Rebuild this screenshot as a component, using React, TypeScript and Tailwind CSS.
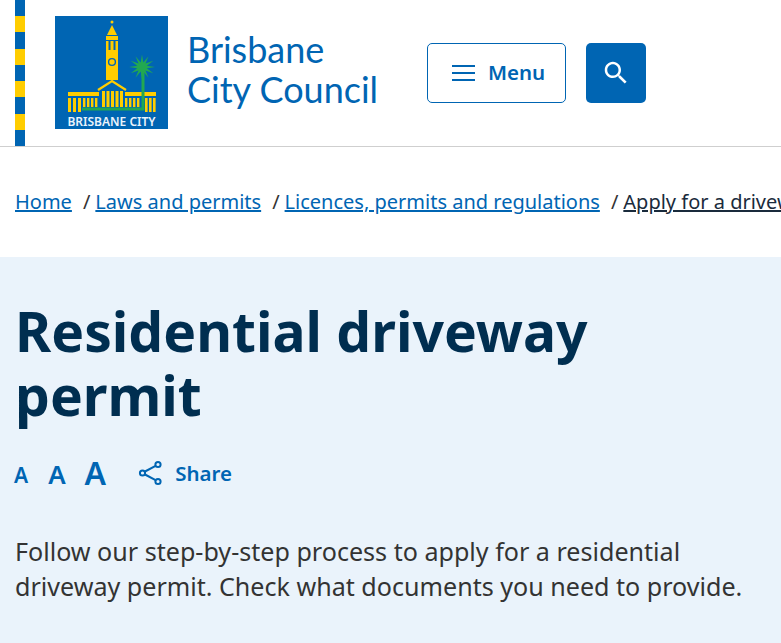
const stripes = ['bg-[#0065b3]', 'bg-[#ffcd00]', 'bg-[#0065b3]', 'bg-[#ffcd00]', 'bg-[#0065b3]', 'bg-[#ffcd00]', 'bg-[#0065b3]', 'bg-[#ffcd00]', 'bg-[#0065b3]'];

const crumbs = ['Home', 'Laws and permits', 'Licences, permits and regulations'];

// palm fronds, a 12 point star round the top of the stem
const palm = Array.from({ length: 24 }, (_, i) => {
  const r = i % 2 === 0 ? 13 : 5;
  const a = (i * Math.PI) / 12 - Math.PI / 2;
  return `${(87 + r * Math.cos(a)).toFixed(1)},${(51 + r * 0.95 * Math.sin(a)).toFixed(1)}`;
}).join(' ');

function Logo() {
  return (
    <svg width="113" height="113" viewBox="0 0 113 113" className="shrink-0">
      <rect width="113" height="113" fill="#0065b3" />
      {/* clock tower */}
      <circle cx="57" cy="6" r="1.5" fill="#ffcd00" />
      <path d="M57 9 L62 19 H52 Z" fill="#ffcd00" />
      <rect x="51" y="20" width="12" height="4" fill="#ffcd00" />
      <rect x="51" y="25" width="2.5" height="9" fill="#ffcd00" />
      <rect x="55.5" y="25" width="3" height="9" fill="#ffcd00" />
      <rect x="60.5" y="25" width="2.5" height="9" fill="#ffcd00" />
      <rect x="51" y="34" width="12" height="30" fill="#ffcd00" />
      <circle cx="57" cy="46" r="3.4" fill="none" stroke="#0065b3" strokeWidth="1.4" />
      {/* roof */}
      <path d="M43 74 L57 65 L71 74" fill="none" stroke="#ffcd00" strokeWidth="2.2" />
      <rect x="13" y="76" width="31" height="4" fill="#ffcd00" />
      <rect x="70" y="76" width="31" height="4" fill="#ffcd00" />
      {/* columns */}
      {[13, 18, 23].map((x) => <rect key={x} x={x} y="82" width="3" height="14" fill="#ffcd00" />)}
      {[27, 31, 35, 39].map((x) => <rect key={x} x={x + 1} y="82" width="2.4" height="9" fill="#ffcd00" />)}
      {[47, 51.5, 56, 60.5, 65].map((x) => <rect key={x} x={x} y="75" width="3" height="16" fill="#ffcd00" />)}
      {[69, 73, 77, 81].map((x) => <rect key={x} x={x + 1} y="82" width="2.4" height="9" fill="#ffcd00" />)}
      {[91, 95, 99].map((x) => <rect key={x} x={x - 1} y="82" width="2.6" height="14" fill="#ffcd00" />)}
      {/* palm */}
      <path d="M27 93 H88 V51" fill="none" stroke="#22a851" strokeWidth="3" />
      <polygon points={palm} fill="#22a851" />
      <text x="56.5" y="110" textAnchor="middle" fill="#eaf3fb" fontSize="12" fontWeight="600" className="font-['Noto_Sans',sans-serif]">BRISBANE CITY</text>
    </svg>
  );
}

function ShareIcon() {
  return (
    <svg width="26" height="26" viewBox="0 0 26 26" fill="none" stroke="#0065b3" strokeWidth="2">
      <circle cx="20" cy="4.5" r="2.6" />
      <circle cx="4.5" cy="13" r="2.6" />
      <circle cx="20" cy="21.5" r="2.6" />
      <path d="M7 11.5 L17.6 5.8 M7 14.5 L17.6 20.2" />
    </svg>
  );
}

export default function App() {
  return (
    <div className="h-[643px] w-[781px] overflow-hidden bg-white font-['Noto_Sans',sans-serif] text-[#333]">
      {/* Header */}
      <header className="flex h-[147px] items-start border-b border-[#cfcfcf] pl-[15px]">
        <div className="flex h-[146px] w-[10px] shrink-0 flex-col">
          {stripes.map((c, i) => (
            <div key={i} className={`flex-1 ${c}`} />
          ))}
        </div>
        <div className="ml-[30px] mt-[16px]">
          <Logo />
        </div>
        <div className="ml-[19px] mt-[29px] w-[240px] shrink-0 font-['Lato',sans-serif] text-[36px] leading-[40px] text-[#0065b3]">
          <div>Brisbane</div>
          <div>City Council</div>
        </div>
        <button className="mt-[43px] flex h-[60px] w-[139px] shrink-0 items-center gap-[13px] rounded-[5px] border border-[#0065b3] pl-[24px] text-[20.5px] font-semibold text-[#0065b3]">
          <span className="flex w-[23px] flex-col gap-[5px]">
            <span className="h-[2px] bg-[#0065b3]" />
            <span className="h-[2px] bg-[#0065b3]" />
            <span className="h-[2px] bg-[#0065b3]" />
          </span>
          <span className="mb-[2px]">Menu</span>
        </button>
        <button className="ml-[20px] mt-[43px] flex h-[60px] w-[60px] shrink-0 items-center justify-center rounded-[5px] bg-[#0065b3]">
          <svg width="30" height="30" viewBox="0 0 24 24" fill="#fff">
            <path d="M15.5 14h-.79l-.28-.27C15.41 12.59 16 11.11 16 9.5 16 5.91 13.09 3 9.5 3S3 5.91 3 9.5 5.91 16 9.5 16c1.61 0 3.09-.59 4.23-1.57l.27.28v.79l5 4.99L20.49 19l-4.99-5zm-6 0C7.01 14 5 11.99 5 9.5S7.01 5 9.5 5 14 7.01 14 9.5 11.99 14 9.5 14z" />
          </svg>
        </button>
      </header>

      {/* Breadcrumb */}
      <nav className="flex h-[110px] items-start whitespace-nowrap pl-[15px] pt-[41px] text-[20px] leading-[28px]">
        {crumbs.map((c, i) => (
          <span key={c} className="flex">
            {i > 0 && <span className="ml-[11px] mr-[5px] text-[#333]">/</span>}
            <a className="text-[#0065b3] underline">{c}</a>
          </span>
        ))}
        <span className="ml-[11px] mr-[5px]">/</span>
        <a className="text-[#1a2b3c] underline">Apply for a driveway permit</a>
      </nav>

      {/* Hero */}
      <section className="h-[386px] bg-[#eaf3fb] pl-[15px] pt-[42px]">
        <h1 className="w-[700px] text-[55.2px] font-bold leading-[64px] text-[#002e50]">
          Residential driveway permit
        </h1>
        <div className="mt-[21px] flex h-[50px] items-center font-semibold text-[#0065b3]">
          <span className="-ml-[1px] mt-[6px] text-[21px]">A</span>
          <span className="ml-[20px] mt-[3px] text-[26px]">A</span>
          <span className="ml-[19px] text-[32px]">A</span>
          <span className="ml-[32px] flex items-center">
            <ShareIcon />
          </span>
          <span className="ml-[11px] text-[20.5px]">Share</span>
        </div>
        <p className="mt-[36px] w-[745px] text-[25.1px] leading-[35px] text-[#333]">
          Follow our step-by-step process to apply for a residential driveway permit. Check what documents you need to provide.
        </p>
      </section>
    </div>
  );
}
